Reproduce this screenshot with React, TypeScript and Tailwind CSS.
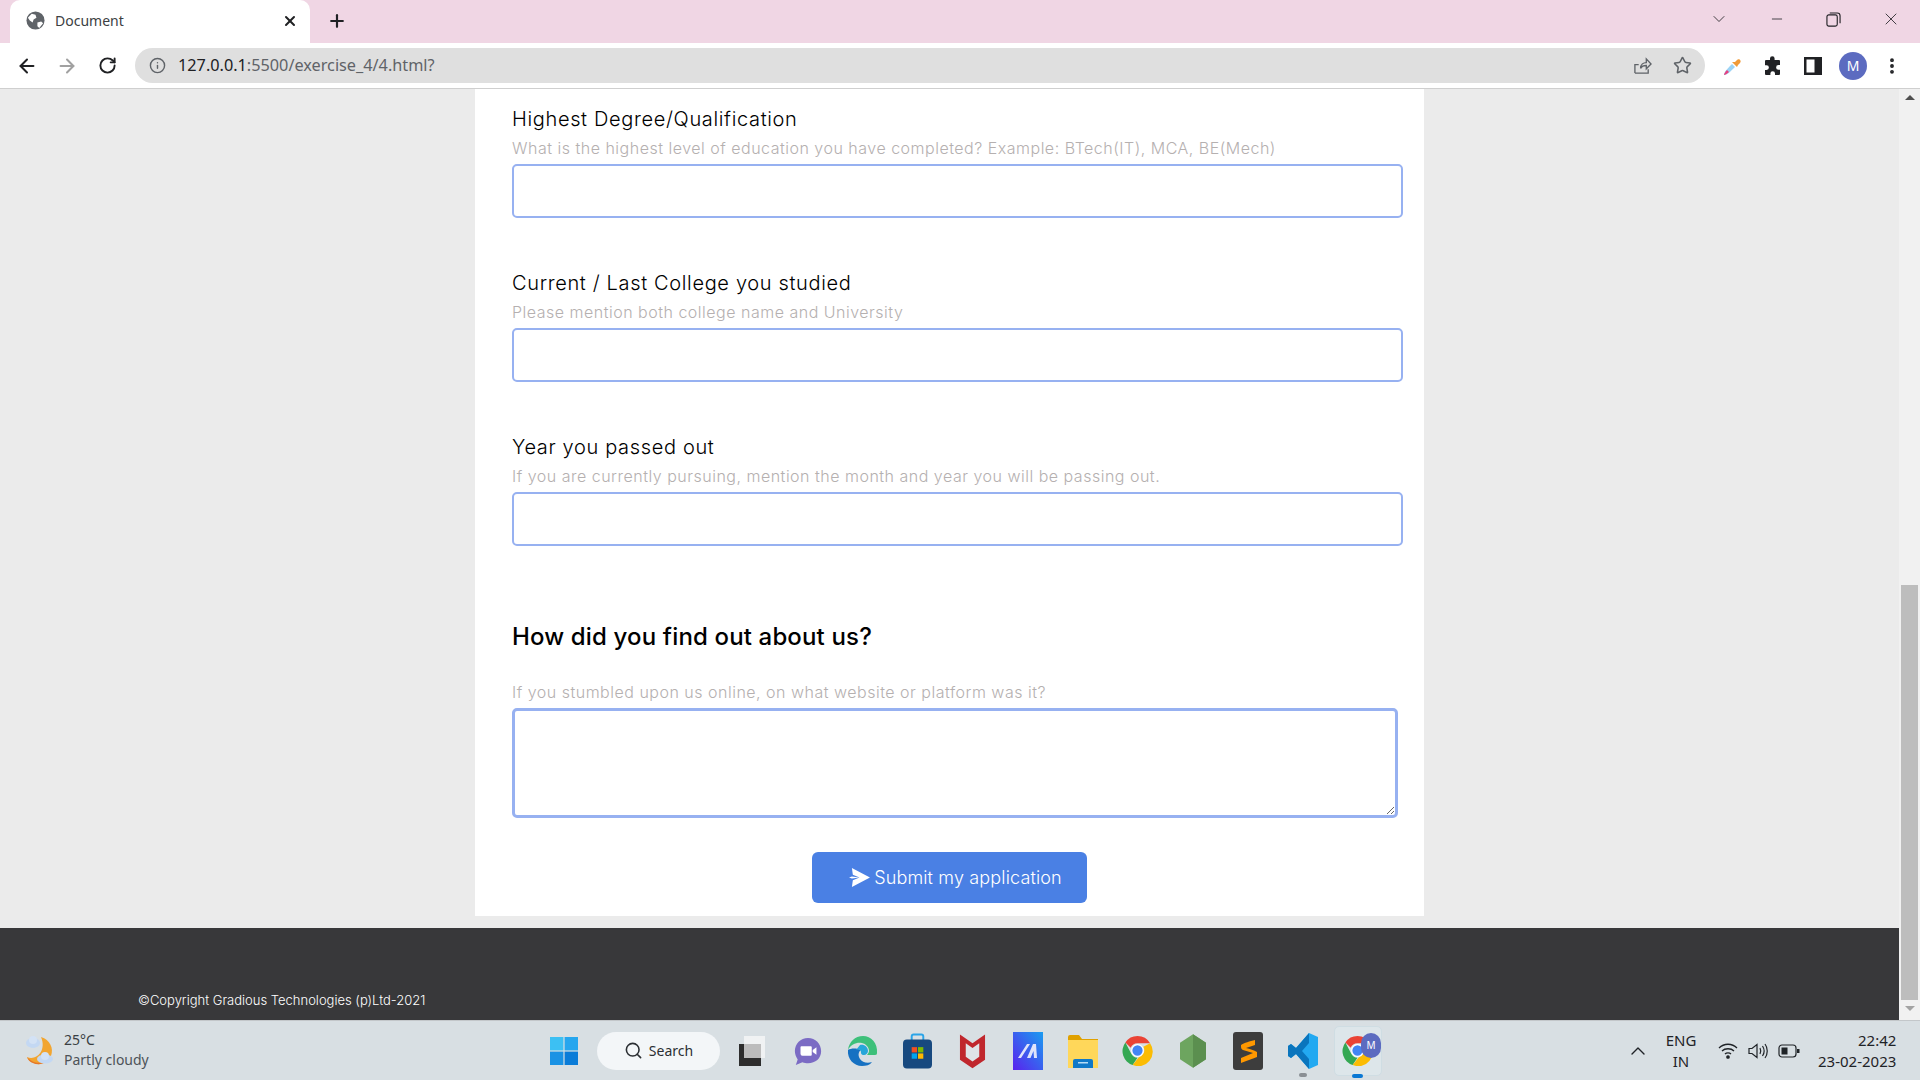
import type { ReactNode } from "react"
import { ArrowLeft, ArrowRight, ChevronDown, ChevronUp, EllipsisVertical, Info, Minus, Plus, RotateCw, Search, Star, X } from "lucide-react"

const pageFont = "font-['Inter',sans-serif]"
const uiFont = "font-['Noto_Sans',sans-serif]"

function Field({ label, hint }: { label: string; hint: string }): ReactNode {
  return (
    <div className="mb-[50px] flex flex-col">
      <label className="h-[30px] text-[20px] leading-[30px] font-light tracking-[0.65px] text-black">{label}</label>
      <p className="mt-[2px] h-[28px] text-[16px] leading-[24px] font-light tracking-[0.5px] text-[#b5b0b0]">{hint}</p>
      <input className="h-[54px] w-[891px] rounded-[5px] border-2 border-[#97b1f1] bg-white" />
    </div>
  )
}

function TabStrip(): ReactNode {
  return (
    <div className={`flex h-[43px] items-end bg-[#f0d6e4] pl-[10px] ${uiFont}`}>
      <div className="flex h-[43px] w-[300px] items-center rounded-t-[10px] bg-white pr-[12px] pb-[2px] pl-[16px]">
        <svg viewBox="0 0 20 20" className="h-[19px] w-[19px]">
          <circle cx="10" cy="10" r="9.500" fill="#5f6368" />
          <path d="M6 3l4 1 1 3-3 2-1 3-3-2-2-3zM12 12l4-1 2 2-4 5-2-2z" fill="#fff" />
        </svg>
        <span className="ml-[10px] flex-1 text-[14px] text-[#3c4043]">Document</span>
        <X size={16} strokeWidth={3} className="text-[#202124]" />
      </div>
      <div className="flex h-[43px] w-[54px] items-center justify-center pb-[2px]">
        <Plus size={20} strokeWidth={2.6} className="text-[#202124]" />
      </div>
      <div className="flex-1" />
      <div className="flex h-[43px] items-center pb-[5px] text-[#202124]">
        <ChevronDown size={20} strokeWidth={1} className="mr-[40px]" />
        <Minus size={16} strokeWidth={1.2} className="mr-[41px]" />
        <svg viewBox="0 0 16 16" className="mr-[40px] h-[15px] w-[15px]" fill="none" stroke="currentColor" strokeWidth="1.2">
          <rect x="1" y="3" width="11" height="12" rx="2" />
          <path d="M4 1h8a3 3 0 0 1 3 3v8" />
        </svg>
        <X size={20} strokeWidth={1} className="mr-[19px]" />
      </div>
    </div>
  )
}

function Toolbar(): ReactNode {
  return (
    <div className={`flex h-[46px] items-start border-b border-[#cfcfcf] bg-white pt-[5px] ${uiFont}`}>
      <div className="flex h-[35px] w-[135px] items-center pl-[16px] text-[#202124]">
        <ArrowLeft size={22} strokeWidth={2.2} />
        <ArrowRight size={22} strokeWidth={2.2} className="ml-[18px] text-[#a1a1a1]" />
        <RotateCw size={19} strokeWidth={2.4} className="ml-[20px]" />
      </div>
      <div className="flex h-[35px] w-[1570px] items-center rounded-full bg-[#dfdfdf] pr-[13px] pl-[14px]">
        <Info size={17} strokeWidth={2} className="text-[#5f6368]" />
        <span className="ml-[12px] flex-1 text-[16.25px] text-[#5f6368]"><span className="text-[#202124]">127.0.0.1</span>:5500/exercise_4/4.html?</span>
        <svg viewBox="0 0 20 20" className="mr-[21px] h-[19px] w-[19px]" fill="none" stroke="#5f6368" strokeWidth="1.4">
          <path d="M2 18V9h4M2 18h14v-4M8 13c0-4 3-6 6-6V3l5 5.500-5 5V10c-3 0-5 1-6 3z" />
        </svg>
        <Star size={19} strokeWidth={2} className="text-[#5f6368]" />
      </div>
      <div className="flex h-[35px] flex-1 items-center pl-[18px]">
        <svg viewBox="0 0 20 20" className="h-[20px] w-[20px]">
          <path d="M1 19c0-3 3-6 8-11l3 3c-5 5-8 8-11 8z" fill="#9cd3f5" />
          <path d="M1 19c0-1 1-3 3-5l2 2c-2 2-4 3-5 3z" fill="#e8407f" />
          <path d="M9 6l5 5 1-2 2-2c2-2-1-5-3-3l-2 2z" fill="#f09a37" />
        </svg>
        <svg viewBox="0 0 20 20" className="ml-[20px] h-[20px] w-[20px]" fill="#202124">
          <path d="M7 2.500a2.300 2.300 0 0 1 4.600 0V4H16a1 1 0 0 1 1 1v4h-1.500a2.400 2.400 0 0 0 0 4.800H17V18a1 1 0 0 1-1 1h-4v-1.500a2.300 2.300 0 0 0-4.600 0V19H3a1 1 0 0 1-1-1v-4h1.500a2.400 2.400 0 0 0 0-4.800H2V5a1 1 0 0 1 1-1h4z" />
        </svg>
        <svg viewBox="0 0 18 18" className="ml-[21px] h-[18px] w-[18px]">
          <rect width="18" height="18" fill="#202124" />
          <rect x="2.500" y="2.500" width="8" height="13" fill="#fff" />
        </svg>
        <div className="ml-[17px] flex h-[28px] w-[28px] items-center justify-center rounded-full bg-[#5c6bc0] text-[14px] text-white">M</div>
        <EllipsisVertical size={20} strokeWidth={2.6} className="ml-[15px] text-[#202124]" />
      </div>
    </div>
  )
}

function WeatherIcon(): ReactNode {
  return (
    <svg viewBox="0 0 34 34" className="h-[34px] w-[34px]">
      <path d="M17 3c9 3 13 11 10 19-3 7-11 10-18 7-3-1-5-3-6-6 9 4 20-6 14-20z" fill="#f2a52f" />
      <path d="M3 23c4 5 12 8 19 4-4 4-9 4-13 2-3-1-5-3-6-6z" fill="#e5762a" />
      <ellipse cx="9" cy="9" rx="7" ry="5" fill="#c3d8f3" />
      <circle cx="9" cy="6" r="4" fill="#d3e2f5" />
      <ellipse cx="21" cy="25" rx="8" ry="4.500" fill="#c3d8f3" />
      <circle cx="21" cy="22" r="4" fill="#d3e2f5" />
    </svg>
  )
}

function WindowsIcon(): ReactNode {
  return (
    <svg viewBox="0 0 28 28" className="h-[28px] w-[28px]">
      <rect width="13.400" height="13.400" fill="#3cc0f3" />
      <rect x="14.600" width="13.400" height="13.400" fill="#25a6ee" />
      <rect y="14.600" width="13.400" height="13.400" fill="#1a92e4" />
      <rect x="14.600" y="14.600" width="13.400" height="13.400" fill="#0a7cd8" />
    </svg>
  )
}

function TaskIcons(): ReactNode {
  const Chrome = (
    <svg viewBox="0 0 32 32" className="h-[31px] w-[31px]">
      <path d="M16 1a15 15 0 0 1 13 7.500H16a7.500 7.500 0 0 0-7 4.700L3.500 7.700A15 15 0 0 1 16 1z" fill="#ea4335" />
      <path d="M3.500 7.700 9.700 19.600a7.500 7.500 0 0 0 6.300 3.900L11 31A15 15 0 0 1 3.500 7.700z" fill="#34a853" />
      <path d="M29 8.500A15 15 0 0 1 11 31l6.300-8A7.500 7.500 0 0 0 22 12z" fill="#fbbc04" />
      <circle cx="16" cy="16" r="6" fill="#4285f4" stroke="#fff" strokeWidth="1.400" />
    </svg>
  )
  return (
    <>
      <div className="flex w-[55px] justify-center">
        <svg viewBox="0 0 32 32" className="h-[34px] w-[30px]">
          <path d="M16 2c8 0 14 6 14 14s-6 13-14 13c-2 0-4 0-6-1l-7 3 2-6c-2-3-3-6-3-9C2 8 8 2 16 2z" fill="#7b6bc4" />
          <path d="M9 11h10a1 1 0 0 1 1 1v8a1 1 0 0 1-1 1H10a2 2 0 0 1-2-2v-7a1 1 0 0 1 1-1zM21 15l4-3v8l-4-3z" fill="#fff" />
        </svg>
      </div>
      <div className="flex w-[55px] justify-center">
        <svg viewBox="0 0 32 32" className="h-[32px] w-[32px]">
          <path d="M30 18C31 8 24 1 16 1 8 1 2 7 1 15c3-6 9-8 14-7 4 1 7 4 7 8 0 1-1 3-2 4h6c3 0 4 0 4-2z" fill="#3dc07a" />
          <path d="M1 15c-1 9 6 16 14 16 4 0 8-1 10-4-5 2-10 0-12-3s-2-7 1-9c-4-2-10-2-13 0z" fill="#1671c2" />
          <path d="M13 10c4-1 8 2 8 6 0 2-2 4-4 4-3 0-3-2-3-3 0-2-2-3-5-2z" fill="#26a6d9" />
        </svg>
      </div>
      <div className="flex w-[55px] justify-center">
        <svg viewBox="0 0 30 36" className="h-[36px] w-[29px]">
          <path d="M9 8V3a2 2 0 0 1 2-2h8a2 2 0 0 1 2 2v5" fill="none" stroke="#2aa4e8" strokeWidth="2" />
          <rect y="6" width="30" height="30" rx="4" fill="#17497f" />
          <rect x="9" y="14" width="5.500" height="5.500" fill="#f25022" />
          <rect x="15.500" y="14" width="5.500" height="5.500" fill="#7fba00" />
          <rect x="9" y="20.500" width="5.500" height="5.500" fill="#00a4ef" />
          <rect x="15.500" y="20.500" width="5.500" height="5.500" fill="#ffb900" />
        </svg>
      </div>
      <div className="flex w-[55px] justify-center">
        <svg viewBox="0 0 28 36" className="h-[36px] w-[27px]">
          <path d="M1 1l6 4 7 5 7-5 6-4v26l-13 9-13-9z" fill="#c0272d" />
          <path d="M7 10l7 5 7-5v14l-7 5-7-5z" fill="#dfe4e8" />
        </svg>
      </div>
      <div className="flex w-[55px] justify-center">
        <svg viewBox="0 0 30 38" className="h-[38px] w-[30px]">
          <defs>
            <linearGradient id="mg" x1="1" y1="0" x2="0" y2="1">
              <stop offset="0" stopColor="#1a9cf0" />
              <stop offset="1" stopColor="#5a22ee" />
            </linearGradient>
          </defs>
          <rect width="30" height="38" fill="url(#mg)" />
          <path d="M5 26 14 12h3L8 26zM14 26l6-14h3l1 14h-3l-.5-7-3 7z" fill="#dfe3fb" />
        </svg>
      </div>
      <div className="flex w-[55px] justify-center">
        <svg viewBox="0 0 30 34" className="h-[34px] w-[30px]">
          <path d="M0 3a2 2 0 0 1 2-2h9l3 4h16v6H0z" fill="#e0a100" />
          <rect y="6" width="30" height="28" fill="#ffd75a" />
          <path d="M5 34v-7a2 2 0 0 1 2-2h16a2 2 0 0 1 2 2v7z" fill="#1079c9" />
          <rect x="10" y="28" width="10" height="1.500" fill="#b5dcf5" />
        </svg>
      </div>
      <div className="flex w-[55px] justify-center">{Chrome}</div>
      <div className="flex w-[55px] justify-center">
        <svg viewBox="0 0 28 36" className="h-[36px] w-[26px]">
          <path d="M14 0l14 9v18l-14 9-14-9V9z" fill="#6da55f" />
          <path d="M14 0l14 9v18l-14 9z" fill="#5b8f4f" />
        </svg>
      </div>
      <div className="flex w-[55px] justify-center">
        <svg viewBox="0 0 30 38" className="h-[38px] w-[30px]">
          <rect width="30" height="38" rx="3" fill="#3d3d3d" />
          <path d="M22 8c-5 1-11 3-14 5 0 3 0 4 2 5l10 3-12 5v5c5-2 11-4 16-6v-5c-3-2-7-3-11-4l9-3z" fill="#ff9800" />
        </svg>
      </div>
      <div className="relative flex w-[55px] justify-center">
        <svg viewBox="0 0 30 36" className="h-[36px] w-[30px]">
          <path d="M21 0l9 4v28l-9 4-13-15-5 4-3-2V13l3-2 5 4z" fill="#23a9f1" />
          <path d="M21 0 8 15l-5-4-3 2v10l3 2 5-4 13 15V26l-7-8 7-8z" fill="#0a75bd" />
        </svg>
        <span className="absolute -bottom-[8px] h-[4px] w-[8px] rounded-full bg-[#8a8f94]" />
      </div>
      <div className="relative flex h-[60px] w-[55px] items-center justify-center">
        <div className="absolute top-[5px] h-[50px] w-[48px] rounded-[5px] border border-[#cfdde3] bg-[#dde6ea]" />
        <div className="relative">{Chrome}</div>
        <span className="absolute top-[12px] right-[4px] flex h-[25px] w-[20px] items-center justify-center rounded-full bg-[#5c6bc0] text-[10px] text-white">M</span>
        <span className="absolute bottom-[3px] h-[4px] w-[11px] rounded-full bg-[#0a78d4]" />
      </div>
    </>
  )
}

function Taskbar(): ReactNode {
  return (
    <div className={`flex h-[60px] items-center border-t border-[#c3c7ca] bg-[#d8dfe3] ${uiFont}`}>
      <div className="flex w-[550px] items-center pl-[24px]">
        <WeatherIcon />
        <div className="ml-[6px] -mt-[2px] text-[14px] leading-[20px] text-[#3a3f44]">
          <div>25°C</div>
          <div className="text-[#4d5358]">Partly cloudy</div>
        </div>
      </div>
      <WindowsIcon />
      <div className="ml-[19px] flex h-[38px] w-[123px] items-center justify-center rounded-full bg-[#f3f6f8] text-[14px] text-[#2b2f33]">
        <Search size={19} strokeWidth={2} />
        <span className="ml-[6px]">Search</span>
      </div>
      <div className="ml-[17px] flex w-[30px] justify-center">
        <div className="relative h-[30px] w-[26px]">
          <div className="absolute bottom-0 left-0 h-[22px] w-[22px] bg-[#2d2d2d]" />
          <div className="absolute top-0 right-0 h-[22px] w-[21px] bg-[#f0f2f3]" />
          <div className="absolute top-[8px] left-[5px] h-[14px] w-[17px] bg-[#bcbcbc]" />
        </div>
      </div>
      <div className="ml-[13px] flex items-center">
        <TaskIcons />
      </div>
      <div className="flex flex-1 items-center text-[#1f2327]">
        <ChevronUp size={24} strokeWidth={1.4} className="ml-[241px]" />
        <div className="ml-[12px] w-[38px] text-center text-[15px] leading-[21px]">ENG<br />IN</div>
        <svg viewBox="0 0 20 16" className="ml-[18px] h-[16px] w-[20px]" fill="none" stroke="currentColor" strokeWidth="1.3">
          <path d="M1 5c5-5 13-5 18 0M4 8c3-3 9-3 12 0M7 11c1.500-1.500 4.500-1.500 6 0" />
          <circle cx="10" cy="14" r="1.200" fill="currentColor" />
        </svg>
        <svg viewBox="0 0 20 16" className="ml-[10px] h-[16px] w-[20px]" fill="none" stroke="currentColor" strokeWidth="1.200">
          <path d="M1 5.500h3l5-4v13l-5-4H1zM12 5c1 2 1 4 0 6M14.500 3c2 3 2 7 0 10M17 1c3 4 3 10 0 14" />
        </svg>
        <svg viewBox="0 0 22 14" className="ml-[10px] h-[14px] w-[22px]" fill="none" stroke="currentColor" strokeWidth="1.200">
          <rect x="1" y="1" width="17" height="12" rx="3" />
          <rect x="3.500" y="3.500" width="6" height="7" fill="currentColor" stroke="none" />
          <rect x="19" y="5" width="2.500" height="4" fill="currentColor" stroke="none" />
        </svg>
        <div className="ml-[18px] text-right text-[15px] leading-[21px]">22:42<br />23-02-2023</div>
      </div>
    </div>
  )
}

function Scrollbar(): ReactNode {
  return (
    <div className="flex w-[21px] flex-col items-center bg-[#f1f1f1] px-[2px]">
      <div className="mt-[6px] h-0 w-0 border-x-[5px] border-b-[5px] border-x-transparent border-b-[#505050]" />
      <div className="mt-[485px] h-[415px] w-[17px] bg-[#bdbdbd]" />
      <div className="mt-[6px] h-0 w-0 border-x-[5px] border-t-[5px] border-x-transparent border-t-[#a3a3a3]" />
    </div>
  )
}

function SendIcon(): ReactNode {
  return (
    <svg viewBox="0 0 22 20" className="h-[19px] w-[21px]" fill="#fff">
      <path d="M3 0l19 10L3 20l1-7 7-3-8 1-3-1 3-1 8 1-7-3z" />
    </svg>
  )
}

export default function App(): ReactNode {
  return (
    <div className="flex h-screen w-full flex-col overflow-hidden">
      <TabStrip />
      <Toolbar />
      <div className="flex min-h-0 flex-1">
        <main className={`flex flex-1 flex-col bg-[#ebebeb] ${pageFont}`}>
          <div className="mx-auto h-[827px] w-[949px] bg-white pt-[15px] pl-[37px]">
            <Field label="Highest Degree/Qualification" hint="What is the highest level of education you have completed? Example: BTech(IT), MCA, BE(Mech)" />
            <Field label="Current / Last College you studied" hint="Please mention both college name and University" />
            <Field label="Year you passed out" hint="If you are currently pursuing, mention the month and year you will be passing out." />
            <h2 className="mt-[74px] text-[24px] leading-[34px] font-medium tracking-[0.15px] text-black">How did you find out about us?</h2>
            <p className="mt-[26px] h-[28px] text-[16px] leading-[24px] font-light tracking-[0.5px] text-[#b5b0b0]">If you stumbled upon us online, on what website or platform was it?</p>
            <textarea className="block h-[110px] w-[886px] rounded-[5px] border-[3px] border-[#97b1f1] bg-white" />
            <button className="mt-[34px] ml-[300px] flex h-[51px] w-[275px] items-center justify-center rounded-[6px] bg-[#4a80e4] pl-[12px] text-[18px] font-light tracking-[0.15px] text-white">
              <SendIcon />
              <span className="ml-[4px]">Submit my application</span>
            </button>
          </div>
          <div className="mt-[12px] flex flex-1 items-end bg-[#38383a] pb-[10px] pl-[138px]">
            <p className="text-[13px] leading-[20px] font-light text-white">©Copyright Gradious Technologies (p)Ltd-2021</p>
          </div>
        </main>
        <Scrollbar />
      </div>
      <Taskbar />
    </div>
  )
}
